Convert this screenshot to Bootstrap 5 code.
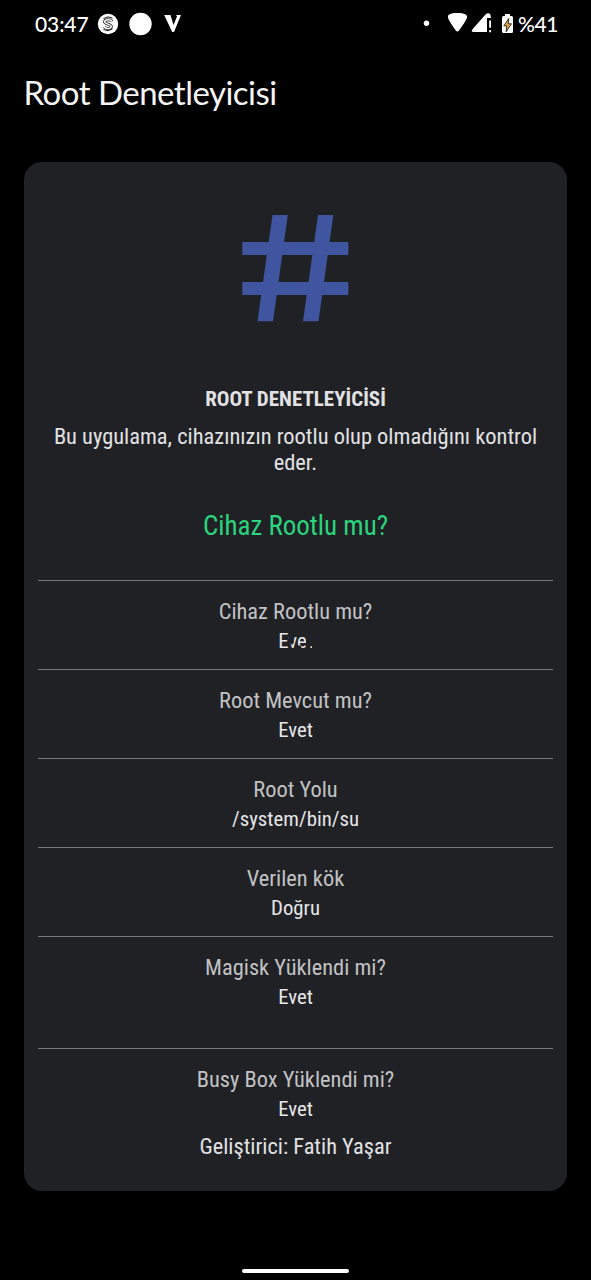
<!DOCTYPE html>
<html lang="tr">
<head>
<meta charset="utf-8">
<meta name="viewport" content="width=device-width, initial-scale=1">
<title>Root Denetleyicisi</title>
<link href="https://cdn.jsdelivr.net/npm/bootstrap@5.3.0/dist/css/bootstrap.min.css" rel="stylesheet">
<style>
body{background:#000;color:#e2e2e4;font-family:"Roboto Condensed",Roboto,sans-serif;font-stretch:75%;height:1280px;overflow:hidden}
.status{height:48px;padding:0 34px 0 35px;font:500 21px/48px Lato,sans-serif;color:#fff}
.clock{width:54px;letter-spacing:-.1px}
.charge{width:39px;letter-spacing:-.4px}
.app-title{font:400 33px/40px Lato,sans-serif;letter-spacing:-.52px;color:#f4f4f4;margin:0;padding:24px 0 0 23.5px;height:114px}
.panel{margin:0 24px;width:543px;height:1029px;border-radius:18px;background:#202125;padding:0 14px}
.hash{width:108px;height:108px;margin:53px auto 0}
.heading{font-size:21px;font-weight:700;line-height:26px;margin-top:63px;margin-bottom:0}
.intro{font-size:22.45px;line-height:26px;margin:11px 0 0}
.result{font-size:27px;line-height:32px;color:#2bd47d;margin:35px 0 0}
.entries{margin-top:38px}
.entry{height:89px;border-top:1px solid #77787b;padding-top:15px}
.entry-tall{height:112px}
.entry-last{height:83px}
.entry-label{font-size:22.4px;line-height:30px;color:#c2c2c4}
.entry-value{font-size:20.8px;line-height:30px;color:#e6e6e8}
.glitch{left:0;top:0}
.dev{font-size:22.4px;line-height:30px}
.homebar{width:107px;height:4px;border-radius:2px;background:#fff;margin:78px auto 0}
</style>
</head>
<body class="d-flex flex-column">
<header class="status d-flex align-items-center flex-shrink-0">
<span class="clock">03:47</span>
<svg width="110" height="48" viewBox="89 0 110 48" fill="#fff">
<circle cx="108" cy="24" r="10.200"/>
<path d="M111.800 21.300c-.7-2-6.900-2.200-7.200.4-.3 2.800 7 2 6.700 4.800-.3 2.600-5.800 2.400-7.100.5" fill="none" stroke="#222" stroke-width="3"/>
<path d="M111.800 21.300c-.7-2-6.900-2.200-7.200.4-.3 2.800 7 2 6.700 4.800-.3 2.600-5.800 2.400-7.100.5" fill="none" stroke="#fff" stroke-width="1.500"/>
<path d="M103.500 18.500Q108 15.500 112.500 18M103.500 29.500Q108 32 112.500 29" fill="none" stroke="#222" stroke-width="1"/>
<circle cx="140.500" cy="24" r="11.200"/>
<path d="M164.200 15h6.300l3 10 3.500-8.500-1-1.500h5l-7 17h-1.800Z"/>
</svg>
<svg class="ms-auto" width="98" height="48" viewBox="419 0 98 48" fill="#fff">
<circle cx="425.500" cy="23.200" r="2.700"/>
<path d="M447 17.500C446.500 14.500 449 13 456.300 13s10.200 1.500 9.700 4.500c-.4 2.500-6 10.300-8 13-.9 1.200-2.300 1.200-3.200 0-2-2.700-7.400-10.500-7.800-13Z"/>
<path d="M471.500 29.200 484.500 14.600Q487 12 489.300 14.200L490 18h-4V32H472.500Q469.500 31.800 471.500 29.200Z"/>
<path d="M488.200 20.500h1.800v7.300h-1.800ZM488.200 30h1.800v2.200h-1.800Z"/>
<path d="M504 16v-2h5v2h1.500q1.500 0 1.500 1.500v14q0 1.500-1.500 1.500h-8q-1.500 0-1.500-1.500v-14q0-1.500 1.500-1.500Z"/>
<path d="m507.800 18.500-5 7.300h3l-.7 6 5.300-8h-3.200Z" fill="#e3ad42" stroke="#201c17" stroke-width=".9"/>
</svg>
<span class="charge text-nowrap">%41</span>
</header>
<h1 class="app-title flex-shrink-0">Root Denetleyicisi</h1>
<main class="panel text-center flex-shrink-0">
<svg class="hash d-block" viewBox="0 0 108 108" fill="#4055a0"><path d="M30.500 0h15.300L31 106.300H15.500ZM76 0h15.300L76.500 106.300H61ZM.3 27h106v13H.3ZM.3 67h106v13H.3Z"/></svg>
<h2 class="heading">ROOT DENETLEYİCİSİ</h2>
<p class="intro">Bu uygulama, cihazınızın rootlu olup olmadığını kontrol<br>eder.</p>
<p class="result">Cihaz Rootlu mu?</p>
<div class="entries">
<div class="entry"><div class="entry-label">Cihaz Rootlu mu?</div><div class="entry-value"><span class="position-relative d-inline-block">Evet<svg class="glitch position-absolute" width="36" height="30" viewBox="0 0 36 30" fill="#202125"><path d="M11 9h3l2 7-2 3-3-3ZM19 19l4 1 1 4h-6ZM28 4h8v16h-8ZM28 19h4.500v5H28ZM34 19h2v5h-2Z"/></svg></span></div></div>
<div class="entry"><div class="entry-label">Root Mevcut mu?</div><div class="entry-value">Evet</div></div>
<div class="entry"><div class="entry-label">Root Yolu</div><div class="entry-value">/system/bin/su</div></div>
<div class="entry"><div class="entry-label">Verilen kök</div><div class="entry-value">Doğru</div></div>
<div class="entry entry-tall"><div class="entry-label">Magisk Yüklendi mi?</div><div class="entry-value">Evet</div></div>
<div class="entry entry-last"><div class="entry-label">Busy Box Yüklendi mi?</div><div class="entry-value">Evet</div></div>
</div>
<div class="dev">Geliştirici: Fatih Yaşar</div>
</main>
<div class="homebar flex-shrink-0"></div>
<script src="https://cdn.jsdelivr.net/npm/bootstrap@5.3.0/dist/js/bootstrap.bundle.min.js"></script>
</body>
</html>
